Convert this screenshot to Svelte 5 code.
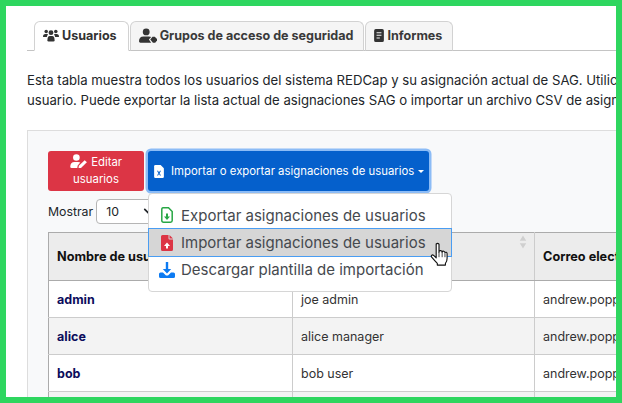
<script>
  const rows = [
    { user: "admin", name: "joe admin", email: "andrew.poppe@yale.edu" },
    { user: "alice", name: "alice manager", email: "andrew.poppe@yale.edu" },
    { user: "bob", name: "bob user", email: "andrew.poppe@yale.edu" },
    { user: "carol", name: "carol user", email: "andrew.poppe@yale.edu" }
  ];
</script>

<div class="frame">
  <ul class="tabs">
    <li class="tab active">
      <svg class="tab-icon" viewBox="0 0 20 16" width="16" height="13">
        <circle cx="4" cy="3" r="2.2" /><circle cx="16" cy="3" r="2.2" /><circle cx="10" cy="4.5" r="3" />
        <path d="M0 9.5Q0 6 3 6h2.5Q6 6 6.2 6.6 5 7.8 4.8 10H1Q0 10 0 9.5ZM20 9.5Q20 6 17 6h-2.5Q14 6 13.8 6.6 15 7.8 15.2 10H19Q20 10 20 9.5Z" />
        <path d="M5.5 14Q5.5 8.5 8.5 8.5h3q3 0 3 5.500Q14.500 15.500 13 15.500H7Q5.500 15.500 5.500 14Z" />
      </svg>
      Usuarios
    </li>
    <li class="tab">
      <svg class="tab-icon" viewBox="0 0 20 16" width="18" height="15">
        <circle cx="8" cy="4" r="3.800" />
        <path d="M0 14.500Q0 9 5 9h6q1.500 0 2.500.6L11 12.500 13.500 16H1.500Q0 16 0 14.500Z" />
        <path d="M12.500 12.500 15 9.500h2.500L20 12v1.500L18 16h-2.500Z" />
      </svg>
      Grupos de acceso de seguridad
    </li>
    <li class="tab">
      <svg class="tab-icon" viewBox="0 0 12 16" width="10" height="13">
        <path fill-rule="evenodd" d="M2 0h8q2 0 2 2v12q0 2-2 2H2q-2 0-2-2V2q0-2 2-2ZM3 4v1.200h6V4ZM3 7.200v1.200h6V7.200ZM3 10.400v1.200h4v-1.200Z" />
      </svg>
      Informes
    </li>
  </ul>

  <div class="intro">
    <p>Esta tabla muestra todos los usuarios del sistema REDCap y su asignación actual de SAG. Utilice esta tabla para editar</p>
    <p>usuario. Puede exportar la lista actual de asignaciones SAG o importar un archivo CSV de asignaciones de usuarios.</p>
  </div>

  <div class="card">
    <div class="actions">
      <button class="btn red">
        <svg viewBox="0 0 20 16" width="18" height="14" fill="#fff">
          <circle cx="7" cy="4" r="3.800" />
          <path d="M0 14.500Q0 9 5 9h4q1.500 0 2.500.8L8.500 13 8 16H1.500Q0 16 0 14.500Z" />
          <path d="M9.800 13.500 16.500 7l2.500 2.500-6.700 6.500-2.800.3Z" />
        </svg>
        Editar<br />usuarios
      </button>
      <button class="btn blue">
        <svg viewBox="0 0 12 16" width="10" height="13">
          <path fill="#fff" d="M1.500 0H8l4 4v10.500q0 1.500-1.500 1.500h-9Q0 16 0 14.500v-13Q0 0 1.500 0Z" />
          <path fill="#0560cc" d="M3.500 7h1.300L6 9l1.200-2h1.300L6.700 10l1.800 3H7.200L6 11 4.800 13H3.500l1.800-3Z" />
        </svg>
        <span>Importar o exportar asignaciones de usuarios</span>
        <i class="caret"></i>
      </button>
    </div>

    <div class="length">
      <span>Mostrar</span>
      <div class="select">10
        <svg viewBox="0 0 16 16" width="14" height="14"><path d="M2 5l6 6 6-6" fill="none" stroke="#212529" stroke-width="2" stroke-linecap="round" stroke-linejoin="round" /></svg>
      </div>
    </div>

    <table>
      <colgroup><col class="c1" /><col class="c2" /><col class="c3" /></colgroup>
      <thead>
        <tr>
          <th>Nombre de usuario</th>
          <th>Nombre completo
            <svg class="sort" viewBox="0 0 10 16" width="8" height="14"><path d="M5 0l4 6.500H1ZM5 16l4-6.500H1Z" fill="#cfcfcf" /></svg>
          </th>
          <th>Correo electrónico</th>
        </tr>
      </thead>
      <tbody>
        {#each rows as row, i}
          <tr class:odd={i % 2 === 1}>
            <td class="user">{row.user}</td>
            <td>{row.name}</td>
            <td>{row.email}</td>
          </tr>
        {/each}
      </tbody>
    </table>
  </div>

  <ul class="menu">
    <li>
      <svg viewBox="0 0 12 16" width="12" height="16">
        <path fill="none" stroke="#28a745" stroke-width="1.500" d="M2 .8h5.500L11.200 4.500V13.500q0 1.700-1.700 1.700h-7q-1.700 0-1.700-1.700V2.500Q.8.800 2 .8Z" />
        <path fill="#28a745" d="M5 6.500h2v3h2L6 13 3 9.500h2Z" />
      </svg>
      Exportar asignaciones de usuarios
    </li>
    <li class="hover">
      <svg viewBox="0 0 12 16" width="12" height="16">
        <path fill="#dc3545" d="M1.500 0H7.500v3.500q0 1 1 1H12v10q0 1.500-1.500 1.500h-9Q0 16 0 14.500v-13Q0 0 1.500 0ZM8.500 0 12 3.500H8.500Z" />
        <path fill="#fff" d="M6 7.500 9 11H7v2.500H5V11H3Z" />
      </svg>
      Importar asignaciones de usuarios
    </li>
    <li class="last">
      <svg class="wide" viewBox="0 0 16 16" width="16" height="16">
        <path fill="#0d7bf2" d="M6.800 0h2.400v7h3L8 11.500 3.800 7h3Z" />
        <path fill="#0d7bf2" d="M1.500 10.500H4L7 13.500h2l3-3h2.500q1.500 0 1.500 1.500v2.500q0 1.500-1.500 1.500h-13Q0 16 0 14.500V12q0-1.500 1.500-1.500Z" />
      </svg>
      Descargar plantilla de importación
    </li>
  </ul>

  <svg class="cursor" viewBox="0 0 16 22" width="18" height="24.750">
    <path fill="#fff" stroke="#111" stroke-width="1" stroke-linejoin="round" d="M5.500 1.800q1.300-1.200 2.500 0V9q.2-1.500 1.500-1.300t1.300 1.300q.3-1 1.400-.8t1.100 1.300q.5-.6 1.200-.3t.7 1.300v4q0 3-1.500 4.500v1.500H6.500v-1.500Q4 16.500 1.500 13.500.8 12.500 1.500 11.800t2 .3l2 2Z" />
    <path fill="none" stroke="#111" stroke-width=".7" d="M8 9v4.500M10.800 9v4.500M13.300 10v3.500" />
  </svg>
</div>

<style>
  :global(body) {
    margin: 0;
  }
  .frame {
    position: relative;
    box-sizing: border-box;
    width: 622px;
    height: 403px;
    border: 6px solid #2ed65f;
    background: #fff;
    overflow: hidden;
    font-family: Inter, sans-serif;
    font-size: 13.150px;
    color: #212529;
  }
  .tabs {
    display: flex;
    gap: 1px;
    list-style: none;
    margin: 15px 0 0 21px;
    padding: 0 0 0 7px;
    height: 29px;
    border-bottom: 1px solid #c4c4c4;
  }
  .tab {
    display: flex;
    align-items: center;
    gap: 3px;
    box-sizing: border-box;
    height: 30px;
    padding: 0 10px 2px 8px;
    background: #f5f5f5;
    border: 1px solid #d2d2d2;
    border-bottom: 1px solid #c4c4c4;
    border-radius: 6px 6px 0 0;
    font-weight: 700;
    font-size: 12.550px;
    color: #3a3a3a;
    white-space: nowrap;
  }
  .tab.active {
    padding-right: 11px;
    background: #fff;
    border-bottom-color: #fff;
    color: #333;
  }
  .tab-icon {
    fill: #333;
    flex: none;
  }
  .intro {
    margin: 20px 0 0 21px;
    white-space: nowrap;
    line-height: 19.500px;
  }
  .intro p {
    margin: 0;
  }
  .card {
    margin: 20px 0 0 21px;
    padding: 20px;
    width: 700px;
    height: 300px;
    background: #f8f9fa;
    border: 1px solid #dddddd;
  }
  .actions {
    display: flex;
    gap: 4px;
  }
  .btn {
    box-sizing: border-box;
    height: 40px;
    border: 0;
    border-radius: 3px;
    color: #fff;
    font-family: inherit;
    font-size: 11.350px;
    line-height: 17px;
    padding: 0;
  }
  .red {
    width: 96px;
    background: #dc3545;
  }
  .red svg {
    vertical-align: -2px;
  }
  .blue {
    display: flex;
    align-items: center;
    gap: 7px;
    width: 281px;
    padding-left: 6px;
    background: #0560cc;
    box-shadow: 0 0 0 2.500px #8cbcf6;
    white-space: nowrap;
  }
  .caret {
    margin-left: -3px;
    border-top: 3.500px solid #fff;
    border-left: 3.500px solid transparent;
    border-right: 3.500px solid transparent;
  }
  .length {
    display: flex;
    align-items: center;
    gap: 3px;
    margin-top: 8px;
    font-size: 12.300px;
  }
  .select {
    display: flex;
    align-items: center;
    justify-content: space-between;
    box-sizing: border-box;
    width: 64px;
    height: 25px;
    padding: 0 2px 0 9px;
    background: #fff;
    border: 1px solid #b5b5b5;
    border-radius: 4px;
  }
  table {
    margin-top: 8px;
    border-collapse: collapse;
    table-layout: fixed;
    width: 686px;
    font-size: 12.500px;
    background: #fff;
  }
  .c1 {
    width: 244px;
  }
  .c2 {
    width: 242px;
  }
  .c3 {
    width: 200px;
  }
  th,
  td {
    text-align: left;
    padding: 0 8px;
    border: 1px solid #cccccc;
    white-space: nowrap;
    overflow: hidden;
  }
  th {
    position: relative;
    height: 47px;
    background: #ececec;
    border-top: 1px solid #ababab;
    border-bottom: 1px solid #ababab;
    font-size: 12.700px;
    color: #111;
  }
  th:first-child,
  td:first-child {
    border-left: 1px solid #ababab;
  }
  .sort {
    position: absolute;
    top: 2px;
    right: 7px;
  }
  td {
    height: 36px;
    color: #333;
  }
  tr.odd td {
    background: #f3f3f3;
  }
  .user {
    font-weight: 700;
    font-size: 12.500px;
    color: #0c0c5c;
  }
  .menu {
    position: absolute;
    left: 142px;
    top: 187px;
    box-sizing: border-box;
    width: 304px;
    height: 99px;
    list-style: none;
    margin: 0;
    padding: 7px 0;
    background: #fff;
    border: 1px solid #d6d6d6;
    border-radius: 4px;
    font-size: 15px;
    color: #45494e;
  }
  .menu li {
    display: flex;
    align-items: center;
    gap: 8px;
    box-sizing: border-box;
    height: 28px;
    padding-left: 12px;
    border: 1px solid transparent;
    margin-left: -1px;
    margin-right: -1px;
  }
  .menu li + li {
    margin-top: -1px;
  }
  .menu li.hover {
    height: 29px;
    background: #d6d6d6;
    border-color: #4a9df2;
  }
  .menu li.last {
    height: 27px;
  }
  .menu .wide {
    margin-left: -2px;
    margin-right: -2px;
  }
  .cursor {
    position: absolute;
    left: 424px;
    top: 236px;
  }
</style>
